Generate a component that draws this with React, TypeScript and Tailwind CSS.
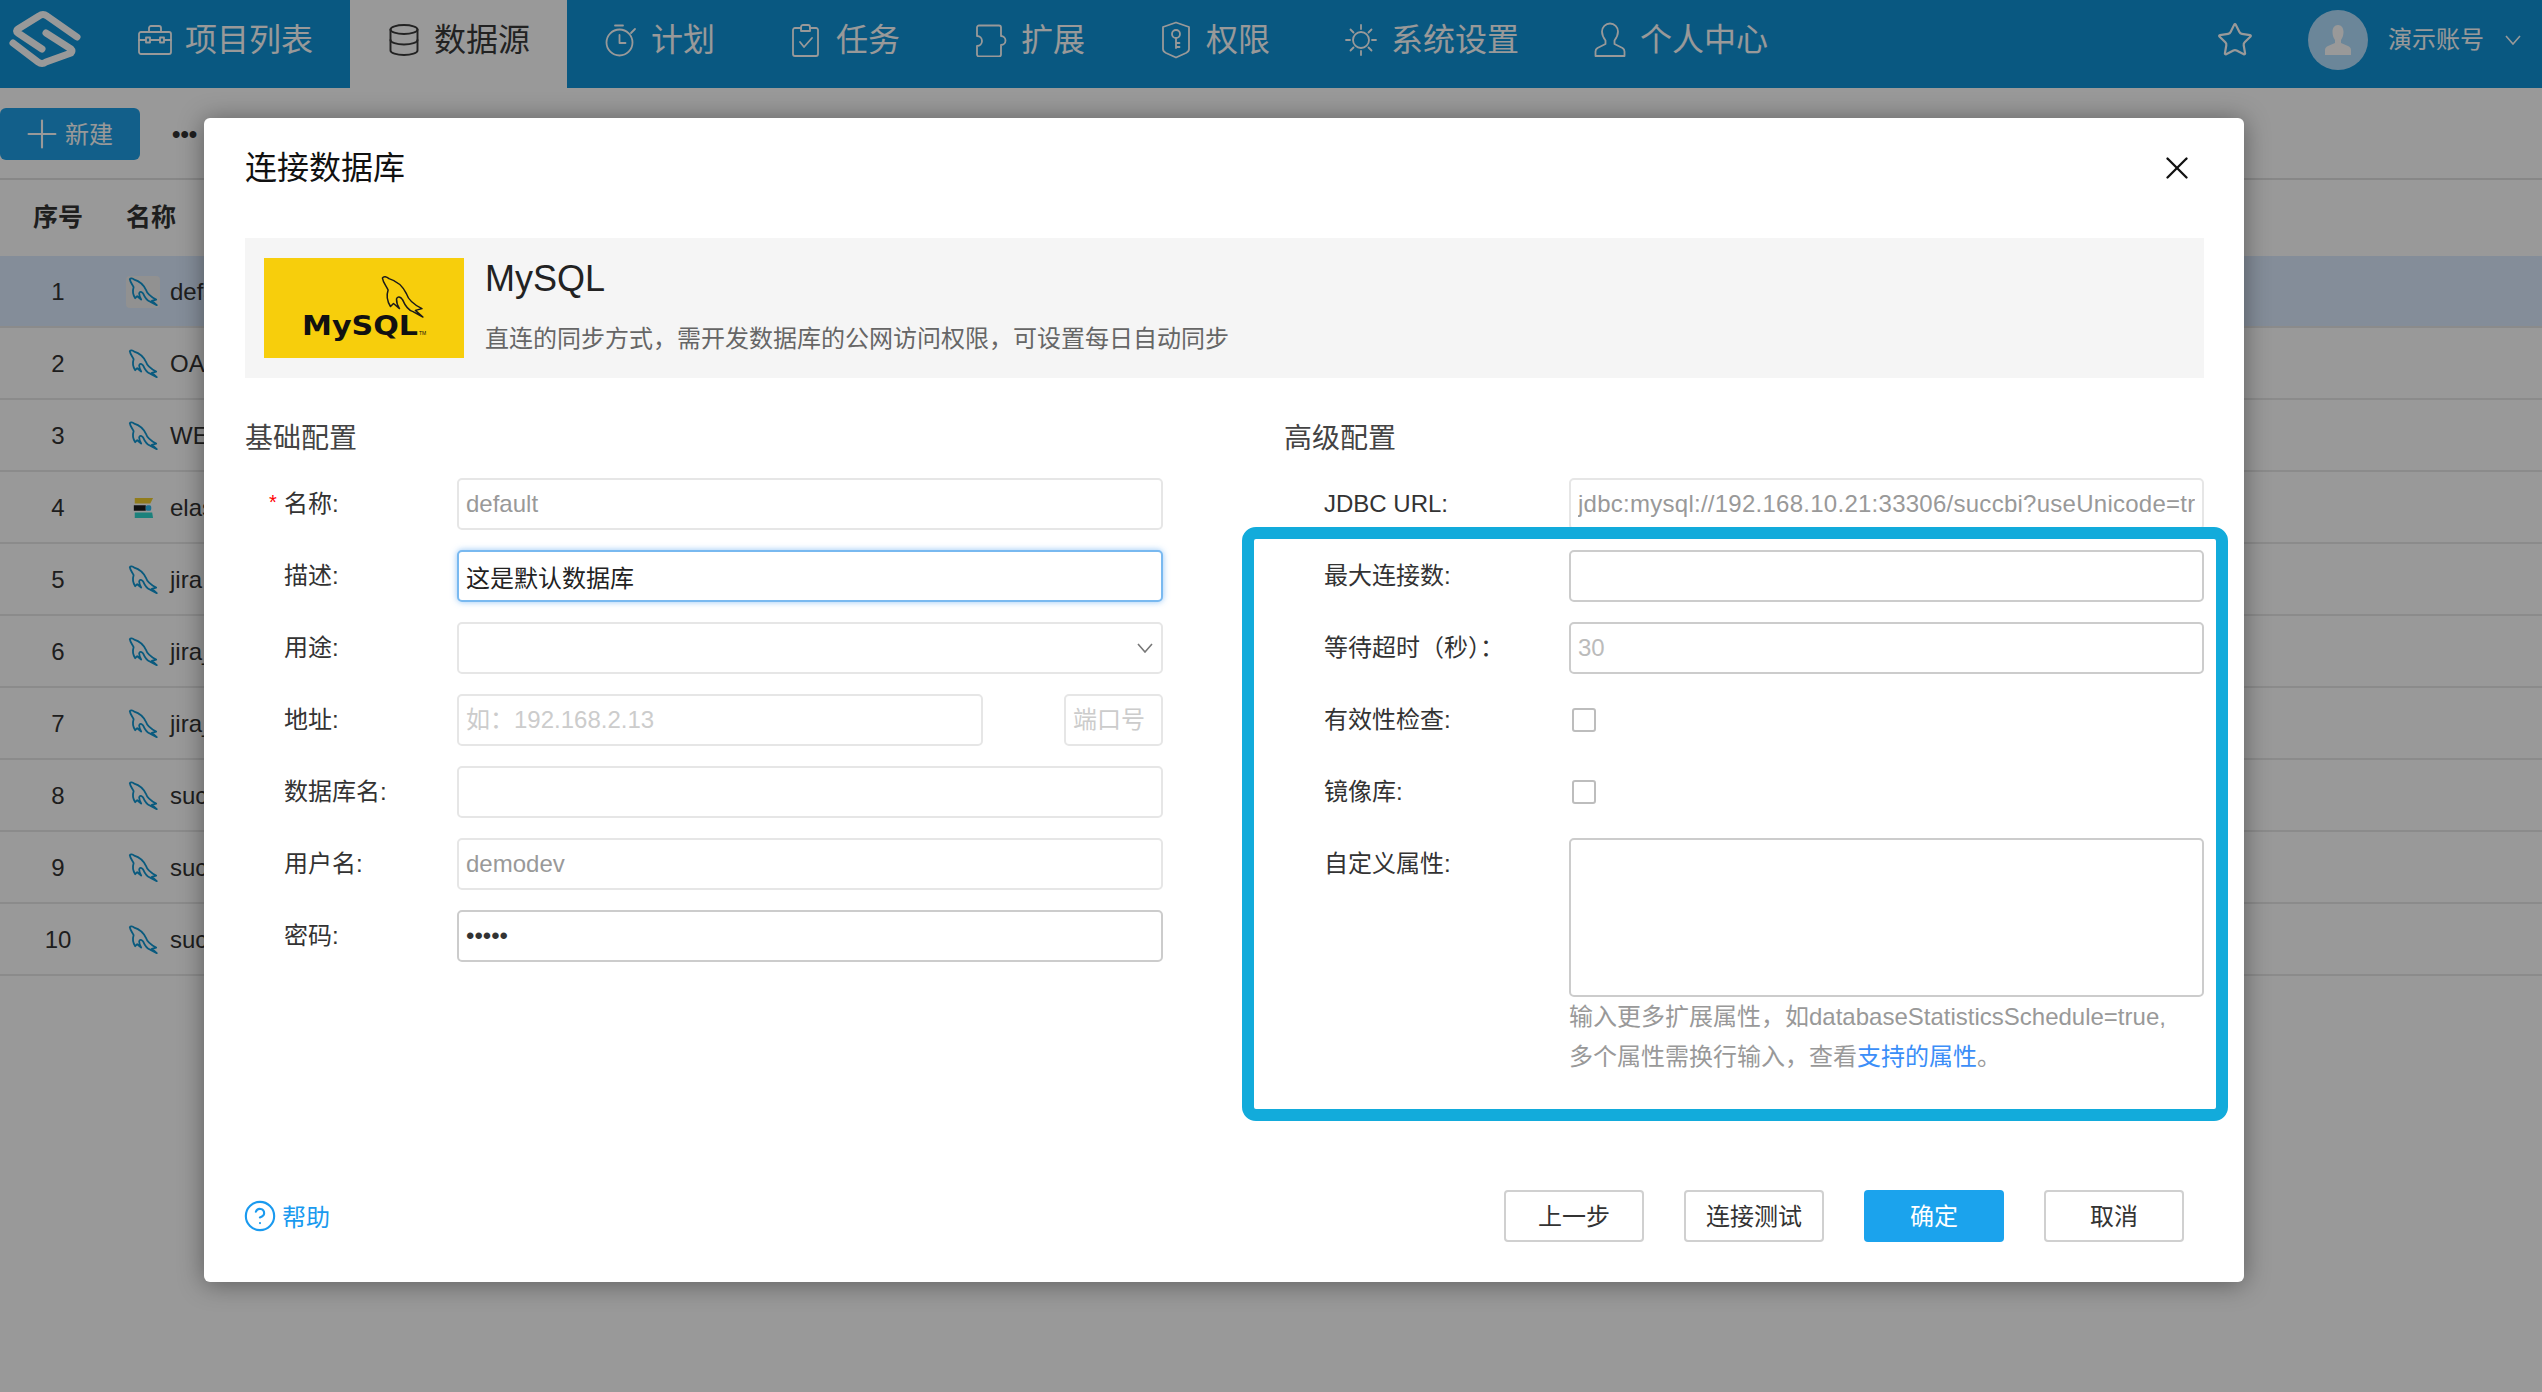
import React from "react";
import { Database, Star, X, CircleHelp, Plus } from "lucide-react";

const S = { fill: "none", stroke: "currentColor", strokeWidth: 1.8, strokeLinecap: "round" as const, strokeLinejoin: "round" as const };

const DOLPHIN = "M8 10C12 3 22 5 30 12C50 18 75 35 88 62C93 78 105 95 140 112L118 118L143 140L110 122C95 118 85 105 75 82C68 72 58 70 55 80C55 90 60 105 65 112L45 95L35 105C22 85 22 65 27 50C20 35 10 25 8 10Z";

const COMMA = "\uFF0C";
const COLON = "\uFF1A";
const LP = "\uFF08";
const RP = "\uFF09";

function Dolphin({ size = 30 }: { size?: number }) {
  return (
    <svg width={size} height={size} viewBox="-6 -6 160 160" className="shrink-0">
      <path d={DOLPHIN} fill="none" stroke="currentColor" strokeWidth="9" strokeLinejoin="round" />
    </svg>
  );
}

function Logo() {
  return (
    <svg width="88" height="80" viewBox="0 0 88 80" className="text-white">
      <path d="M77 37 L47 16 Q43 13 39 16 L18 29 Q15 31 18 33 L42 49" fill="none" stroke="currentColor" strokeWidth="7" strokeLinecap="round" strokeLinejoin="round" />
      <path d="M13 43 L38 62 Q42 65 46 62 L71 53 Q73 51 71 49 L46 33" fill="none" stroke="currentColor" strokeWidth="7" strokeLinecap="round" strokeLinejoin="round" />
    </svg>
  );
}
function Briefcase() {
  return (
    <svg width="34" height="30" viewBox="0 0 34 30" className="shrink-0">
      <rect x="1" y="7" width="32" height="22" rx="2" {...S} />
      <path d="M11 7V3a2 2 0 0 1 2-2h8a2 2 0 0 1 2 2v4M1 15h32" {...S} />
      <rect x="8" y="12.5" width="4" height="5" {...S} fill="#0f93d7" />
      <rect x="22" y="12.5" width="4" height="5" {...S} fill="#0f93d7" />
    </svg>
  );
}
function TimerI() {
  return (
    <svg width="32" height="33" viewBox="0 0 32 33" className="shrink-0">
      <path d="M10 1.500h8" {...S} />
      <circle cx="14.500" cy="18.500" r="13" {...S} />
      <path d="M14.500 11v8h6M26 9l4-4" {...S} />
    </svg>
  );
}
function Clip() {
  return (
    <svg width="28" height="33" viewBox="0 0 28 33" className="shrink-0">
      <path d="M9 4H3a2 2 0 0 0-2 2v24a2 2 0 0 0 2 2h21a2 2 0 0 0 2-2V6a2 2 0 0 0-2-2h-6" {...S} />
      <path d="M9 7V3a2 2 0 0 1 2-2h5a2 2 0 0 1 2 2v4z" {...S} />
      <path d="M8 18l4 5 8-9" {...S} />
    </svg>
  );
}
function PuzzleI() {
  return (
    <svg width="33" height="33" viewBox="0 0 33 33" className="shrink-0">
      <path d="M4 1.500h20a2 2 0 0 1 2 2V12a4.500 4.500 0 0 1 0 9v9.500a2 2 0 0 1-2 2H4a2 2 0 0 1-2-2V22a5 5 0 0 0 0-10V3.500a2 2 0 0 1 2-2z" {...S} />
    </svg>
  );
}
function ShieldKey() {
  return (
    <svg width="30" height="38" viewBox="0 0 30 38" className="shrink-0">
      <path d="M15 1.500 28 6v22c0 2-1 3-3 4l-10 4.500-10-4.500c-2-1-3-2-3-4V6z" {...S} />
      <circle cx="15" cy="13" r="4" {...S} />
      <path d="M15 17v10M15 22h3.500M15 26h3.500" {...S} />
    </svg>
  );
}
function SunI() {
  return (
    <svg width="32" height="32" viewBox="0 0 32 32" className="shrink-0">
      <circle cx="16" cy="16" r="8" {...S} />
      <path d="M16 1v4M16 27v4M1 16h4M27 16h4M5.500 5.500l3 3M23.500 23.500l3 3M5.500 26.500l3-3M23.500 8.500l3-3" {...S} />
    </svg>
  );
}
function UserI() {
  return (
    <svg width="32" height="36" viewBox="0 0 32 36" className="shrink-0">
      <path d="M16 1.500a8 8 0 0 0-8 8c0 4 2 7 3.500 9v3.500l-8 4c-1.500 1-2 2-2 3.500v4.500h29v-4.500c0-1.500-.5-2.500-2-3.500l-8-4v-3.500c1.500-2 3.500-5 3.500-9a8 8 0 0 0-8-8z" {...S} />
    </svg>
  );
}
function Chevron() {
  return (
    <svg width="16" height="10" viewBox="0 0 16 10" className="shrink-0">
      <path d="M1 1l7 8 7-8" fill="none" stroke="currentColor" strokeWidth="1.600" />
    </svg>
  );
}
function Elastic() {
  return (
    <svg width="22" height="22" viewBox="0 0 24 24">
      <path d="M3 1h20l-3 6H3z" fill="#f2cf2e" />
      <rect x="2" y="9" width="13" height="6" fill="#1c1c1c" />
      <rect x="15" y="9" width="6" height="6" rx="2" fill="#2cbcf0" />
      <path d="M3 17h19l1 6H3z" fill="#2fd8cf" />
    </svg>
  );
}

const navItems: { icon: React.ReactNode; label: string; active?: boolean }[] = [
  { icon: <Briefcase />, label: "项目列表" },
  { icon: <Database size={36} strokeWidth={1.3} className="shrink-0" />, label: "数据源", active: true },
  { icon: <TimerI />, label: "计划" },
  { icon: <Clip />, label: "任务" },
  { icon: <PuzzleI />, label: "扩展" },
  { icon: <ShieldKey />, label: "权限" },
  { icon: <SunI />, label: "系统设置" },
  { icon: <UserI />, label: "个人中心" },
];

const rows = ["default", "OA", "WEB", "elastic", "jira", "jira_1", "jira_2", "succ", "succ1", "succ2"];

function NavItem({ icon, label, active }: { icon: React.ReactNode; label: string; active?: boolean }) {
  return (
    <div className={active ? "h-[88px] flex items-center pl-[40px] pr-[37px] pb-[8px] gap-[16px] bg-white text-[#3a3a3a]" : "h-[88px] flex items-center pl-[40px] pr-[37px] pb-[8px] gap-[16px] text-white"}>
      <span className="w-[28px] flex justify-center items-center">{icon}</span>
      <span className="text-[32px] leading-[40px] whitespace-nowrap">{label}</span>
    </div>
  );
}

function Header() {
  return (
    <div className="h-[88px] bg-[#0f93d7] flex">
      <div className="w-[101px] shrink-0 flex items-center pb-[8px]">
        <Logo />
      </div>
      {navItems.map((n) => (
        <NavItem key={n.label} {...n} />
      ))}
      <div className="ml-auto flex items-center pb-[8px] pr-[21px] text-white">
        <Star size={38} strokeWidth={1.4} className="shrink-0" />
        <div className="ml-[54px] w-[60px] h-[60px] rounded-full bg-[#b3e0ff] flex items-center justify-center">
          <svg width="30" height="30" viewBox="0 0 30 30">
            <path d="M15 0c3.500 0 5.500 3 5.500 7 0 3-1 6-2.500 8v3l7 3c2 1 3 2 3 4v5H2v-5c0-2 1-3 3-4l7-3v-3c-1.500-2-2.500-5-2.500-8 0-4 2-7 5.500-7z" fill="#fff" />
          </svg>
        </div>
        <span className="ml-[20px] text-[24px] leading-[32px]">演示账号</span>
        <span className="ml-[21px]"><Chevron /></span>
      </div>
    </div>
  );
}

function Toolbar() {
  return (
    <div className="h-[92px] border-b-2 border-[#e2e2e2] pt-[20px] flex items-start">
      <div className="w-[140px] h-[52px] bg-[#1f9fe6] rounded-[6px] flex items-center pl-[19px] text-white">
        <Plus size={46} strokeWidth={1.1} className="shrink-0" />
        <span className="text-[24px] pt-[2px]">新建</span>
      </div>
      <div className="ml-[32px] h-[52px] flex items-center text-[24px] font-bold text-[#333]">•••</div>
    </div>
  );
}

function Table() {
  return (
    <div>
      <div className="h-[76px] flex items-center text-[25px] font-bold text-[#333]">
        <div className="w-[116px] text-center">序号</div>
        <div className="pl-[10px]">名称</div>
      </div>
      {rows.map((r, i) => (
        <div key={r} className={i === 0 ? "h-[72px] pt-[2px] flex items-center border-b-2 border-[#e8e8e8] bg-[#dcebff] text-[24px] text-[#333]" : "h-[72px] pt-[2px] flex items-center border-b-2 border-[#e8e8e8] text-[24px] text-[#333]"}>
          <div className="w-[116px] text-center">{i + 1}</div>
          <div className={i === 0 ? "ml-[10px] w-[34px] h-[32px] rounded-[4px] bg-[#f2f2f2] flex items-center justify-center text-[#0f96d2]" : "ml-[10px] w-[34px] h-[32px] flex items-center justify-center text-[#0f96d2]"}>
            {r === "elastic" ? <Elastic /> : <Dolphin size={32} />}
          </div>
          <span className="ml-[10px] whitespace-nowrap">{r}</span>
        </div>
      ))}
    </div>
  );
}

function MySqlLogo() {
  return (
    <svg width="200" height="100" viewBox="0 0 200 100" className="shrink-0">
      <rect width="200" height="100" fill="#f7ce0c" />
      <g transform="translate(116 17) scale(0.3)">
        <path d={DOLPHIN} fill="none" stroke="#1a1a1a" strokeWidth="5" strokeLinejoin="round" />
      </g>
      <text x="38" y="77" fontFamily="'DejaVu Sans',sans-serif" fontWeight="700" fontSize="26" textLength="116" lengthAdjust="spacingAndGlyphs" fill="#111">MySQL</text>
      <text x="155" y="77" fontFamily="'Liberation Sans',sans-serif" fontSize="5" fill="#111">TM</text>
    </svg>
  );
}

const labelL = "w-[212px] shrink-0 flex pl-[24px] text-[24px] leading-[32px] text-[#333]";
const labelR = "w-[285px] shrink-0 pl-[40px] text-[24px] leading-[32px] text-[#333]";
const inputBase = "h-[52px] border-2 rounded-[5px] px-[7px] text-[24px] bg-white outline-none";
const inputFull = inputBase + " w-full";
const btn = "w-[140px] h-[52px] pt-[2px] rounded-[4px] flex items-center justify-center text-[24px]";
const btnPlain = btn + " border-2 border-[#d0d0d0] text-[#333]";

function LRow({ label, req, children }: { label: string; req?: boolean; children: React.ReactNode }) {
  return (
    <div className="h-[52px] flex items-center">
      <div className={labelL}>
        <span className="w-[15px] text-[#f00] text-[20px] leading-[28px]">{req ? "*" : ""}</span>
        <span>{label}</span>
      </div>
      <div className="w-[706px] flex">{children}</div>
    </div>
  );
}
function RRow({ label, children }: { label: string; children: React.ReactNode }) {
  return (
    <div className="h-[52px] flex items-center">
      <div className={labelR}>{label}</div>
      <div className="w-[635px] flex">{children}</div>
    </div>
  );
}

function Dialog() {
  return (
    <div className="absolute left-[204px] top-[118px] w-[2040px] h-[1164px] bg-white rounded-[6px] shadow-[0_2px_26px_rgba(0,0,0,0.4)] pl-[41px] pr-[40px] flex flex-col text-[#333]">
      <div className="h-[120px] shrink-0 flex items-center justify-between pb-[20px] pr-[8px]">
        <span className="text-[32px] leading-[40px] text-[#111]">连接数据库</span>
        <X size={38} strokeWidth={1.5} className="text-[#111]" />
      </div>
      <div className="h-[140px] shrink-0 bg-[#f5f5f5] flex pt-[20px] pl-[19px]">
        <MySqlLogo />
        <div className="ml-[21px]">
          <div className="h-[42px] text-[36px] leading-[42px] text-[#222]">MySQL</div>
          <div className="mt-[19px] text-[24px] leading-[40px] text-[#666]">{"直连的同步方式" + COMMA + "需开发数据库的公网访问权限" + COMMA + "可设置每日自动同步"}</div>
        </div>
      </div>

      <div className="flex mt-[41px] gap-[121px]">
        <div className="w-[918px] shrink-0">
          <div className="text-[28px] leading-[40px] text-[#444]">基础配置</div>
          <div className="mt-[19px] flex flex-col gap-[20px]">
            <LRow label="名称:" req>
              <input readOnly value="default" className={inputFull + " border-[#e6e6e6] text-[#999]"} />
            </LRow>
            <LRow label="描述:">
              <input readOnly value="这是默认数据库" className={inputFull + " border-[#79b9f0] shadow-[0_0_6px_rgba(80,160,240,0.6)] text-[#222]"} />
            </LRow>
            <LRow label="用途:">
              <div className="w-full h-[52px] border-2 border-[#e6e6e6] rounded-[5px] flex items-center justify-end pr-[8px] text-[#777]">
                <Chevron />
              </div>
            </LRow>
            <LRow label="地址:">
              <input readOnly placeholder={"如" + COLON + "192.168.2.13"} className={inputBase + " w-[526px] border-[#e6e6e6] placeholder:text-[#ccc]"} />
              <input readOnly placeholder="端口号" className={inputBase + " w-[99px] ml-auto border-[#e6e6e6] placeholder:text-[#ccc]"} />
            </LRow>
            <LRow label="数据库名:">
              <input readOnly className={inputFull + " border-[#e6e6e6]"} />
            </LRow>
            <LRow label="用户名:">
              <input readOnly value="demodev" className={inputFull + " border-[#e6e6e6] text-[#999]"} />
            </LRow>
            <LRow label="密码:">
              <input readOnly type="password" value="12345" className={inputFull + " border-[#ccc] text-[#333]"} />
            </LRow>
          </div>
        </div>

        <div className="w-[920px] shrink-0">
          <div className="text-[28px] leading-[40px] text-[#444]">高级配置</div>
          <div className="mt-[19px] flex flex-col gap-[20px]">
            <RRow label="JDBC URL:">
              <input readOnly value="jdbc:mysql://192.168.10.21:33306/succbi?useUnicode=true&characterEncoding=utf8" className={inputFull + " tracking-[0.26px] border-[#e6e6e6] text-[#999]"} />
            </RRow>
            <RRow label="最大连接数:">
              <input readOnly className={inputFull + " border-[#ccc]"} />
            </RRow>
            <RRow label={"等待超时" + LP + "秒" + RP + COLON}>
              <input readOnly placeholder="30" className={inputFull + " border-[#ccc] placeholder:text-[#bbb]"} />
            </RRow>
            <RRow label="有效性检查:">
              <input type="checkbox" readOnly className="appearance-none ml-[3px] w-[24px] h-[24px] border-2 border-[#bdbdbd] rounded-[3px] bg-white" />
            </RRow>
            <RRow label="镜像库:">
              <input type="checkbox" readOnly className="appearance-none ml-[3px] w-[24px] h-[24px] border-2 border-[#bdbdbd] rounded-[3px] bg-white" />
            </RRow>
            <div className="flex">
              <div className="w-[285px] shrink-0 pl-[40px] pt-[10px] text-[24px] leading-[32px] text-[#333]">自定义属性:</div>
              <div className="w-[635px]">
                <textarea readOnly className="block w-full h-[159px] border-2 border-[#ccc] rounded-[5px] bg-white outline-none resize-none" />
                <div className="text-[24px] leading-[40px] text-[#999] whitespace-nowrap">
                  <div>{"输入更多扩展属性" + COMMA + "如databaseStatisticsSchedule=true,"}</div>
                  <div>{"多个属性需换行输入" + COMMA + "查看"}<span className="text-[#3b8ef8]">支持的属性</span>。</div>
                </div>
              </div>
            </div>
          </div>
        </div>
      </div>

      <div className="mt-auto pb-[40px] flex items-center justify-between pr-[20px]">
        <div className="flex items-center gap-[5px] text-[#1a9aef]">
          <CircleHelp size={34} strokeWidth={1.5} className="shrink-0 -ml-[2px]" />
          <span className="text-[24px] pt-[3px]">帮助</span>
        </div>
        <div className="flex gap-[40px]">
          <div className={btnPlain}>上一步</div>
          <div className={btnPlain}>连接测试</div>
          <div className={btn + " bg-[#1ba3ed] text-white"}>确定</div>
          <div className={btnPlain}>取消</div>
        </div>
      </div>

      <div className="absolute left-[1038px] top-[409px] w-[986px] h-[594px] border-[12px] border-[#12abdb] rounded-[14px] pointer-events-none" />
    </div>
  );
}

export default function App() {
  return (
    <div className="relative w-full h-[1392px] overflow-hidden bg-white [font-family:'Liberation_Sans','Noto_Sans_CJK_SC',sans-serif]">
      <Header />
      <Toolbar />
      <Table />
      <div className="absolute inset-0 bg-black/40" />
      <Dialog />
    </div>
  );
}
